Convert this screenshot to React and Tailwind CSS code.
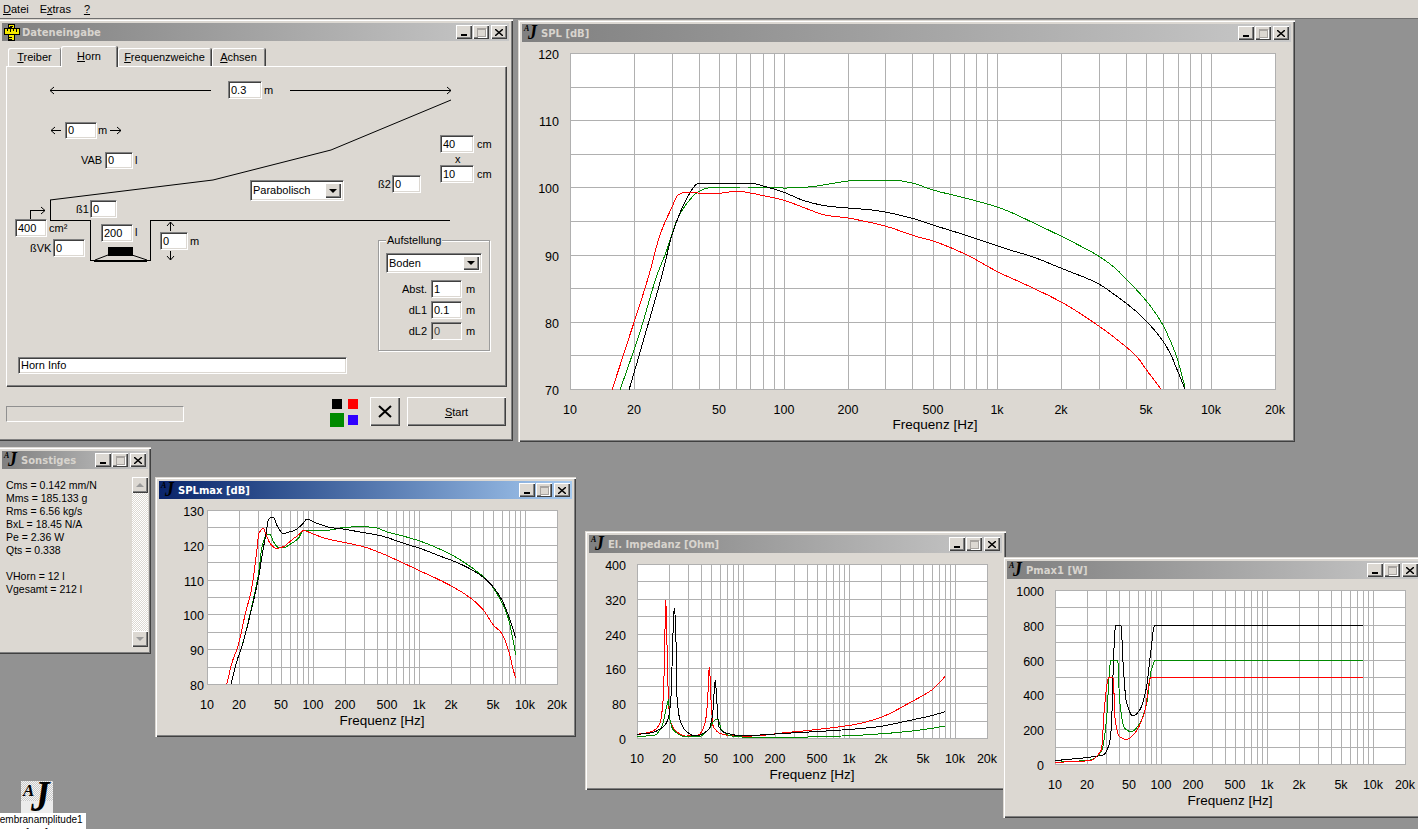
const sunken =
  "border border-t-[#808080] border-l-[#808080] border-r-white border-b-white shadow-[inset_1px_1px_0_#404040,inset_-1px_-1px_0_#dcd8d2]";
const raised =
  "bg-[#dcd8d2] shadow-[inset_1px_1px_0_#fff,inset_-1px_-1px_0_#404040,inset_-2px_-2px_0_#808080]";

// converts points read off a 3x crop back to page coordinates
const z = (ox, oy, pts) => pts.map(([x, y]) => `${ox + x / 3},${oy + y / 3}`).join(" ");

// hermite spline over x through the traced points; slope 0 at peaks so nothing overshoots
const smooth = (str) => {
  const p = str.split(" ").map((s) => s.split(",").map(Number));
  const seg = (i) => (p[i + 1][1] - p[i][1]) / (p[i + 1][0] - p[i][0]);
  const slope = (i) => {
    if (i === 0) return seg(0);
    if (i === p.length - 1) return seg(i - 1);
    const l = seg(i - 1);
    const r = seg(i);
    if (l * r <= 0) return 0;
    return (2 * l * r) / (l + r);
  };
  const out = [];
  for (let i = 0; i < p.length - 1; i++) {
    const [x0, y0] = p[i];
    const [x1, y1] = p[i + 1];
    const d = x1 - x0;
    const m0 = slope(i) * d;
    const m1 = slope(i + 1) * d;
    for (let s = 0; s < 6; s++) {
      const t = s / 6;
      const t2 = t * t;
      const t3 = t2 * t;
      const y =
        (2 * t3 - 3 * t2 + 1) * y0 + (t3 - 2 * t2 + t) * m0 + (-2 * t3 + 3 * t2) * y1 + (t3 - t2) * m1;
      out.push(`${(x0 + d * t).toFixed(1)},${y.toFixed(1)}`);
    }
  }
  const last = p[p.length - 1];
  out.push(`${last[0]},${last[1]}`);
  return out.join(" ");
};

const FREQS = [];
[10, 100, 1000].forEach((d) => {
  for (let i = 1; i < 10; i++) FREQS.push(d * i);
});
FREQS.push(10000, 20000);

const XLABELS = [
  [10, "10"],
  [20, "20"],
  [50, "50"],
  [100, "100"],
  [200, "200"],
  [500, "500"],
  [1000, "1k"],
  [2000, "2k"],
  [5000, "5k"],
  [10000, "10k"],
  [20000, "20k"],
];

const AjLogo = ({ big }) => (
  <span
    className={`flex shrink-0 items-start font-['Liberation_Serif',serif] font-bold italic text-black ${
      big ? "h-[32px] w-[32px] pl-[2px]" : "h-[16px] w-[15px]"
    }`}
  >
    <span className={big ? "text-[17px] leading-[20px]" : "text-[8px] leading-[8px]"}>A</span>
    <span
      className={`origin-left scale-x-[0.85] ${
        big ? "-ml-[3px] text-[44px] leading-[32px]" : "-ml-[1px] text-[21px] leading-[15px]"
      }`}
    >
      J
    </span>
  </span>
);

const RulerIcon = () => (
  <svg width="16" height="17" viewBox="0 0 16 17" className="shrink-0" shapeRendering="crispEdges">
    <rect x="4.5" y="0.5" width="6" height="16" fill="#f5e800" stroke="#000" />
    <rect x="0.5" y="4.5" width="15" height="6" fill="#f5e800" stroke="#000" />
    <path d="M3 5v2M6 5v3M9 5v2M12 5v3M5 3h3M5 13h3M5 15h3M6 2h3" stroke="#000" fill="none" />
  </svg>
);

const TitleBar = ({ title, active, icon }) => (
  <div
    className={`flex h-[18px] shrink-0 items-center pl-[2px] pr-[2px] ${
      active
        ? "bg-linear-to-r from-[#0a246a] to-[#a6caf0]"
        : "bg-linear-to-r from-[#808080] to-[#c8c8c8]"
    }`}
  >
    {icon || <AjLogo />}
    <span
      className={`ml-[2px] flex-1 truncate font-['DejaVu_Sans',sans-serif] text-[10px] font-bold ${
        active ? "text-white" : "text-[#d8d4ce]"
      }`}
    >
      {title}
    </span>
    <div className="flex gap-[1px]">
      <div className={`${raised} flex h-[14px] w-[16px] items-end justify-center pb-[3px]`}>
        <div className="h-[2px] w-[6px] bg-black" />
      </div>
      <div className={`${raised} mr-[1px] flex h-[14px] w-[16px] items-center justify-center`}>
        <div className="h-[9px] w-[9px] border border-t-2 border-[#a8a4a0] shadow-[1px_1px_0_#fff]" />
      </div>
      <div className={`${raised} flex h-[14px] w-[16px] items-center justify-center`}>
        <svg width="8" height="7" viewBox="0 0 8 7">
          <path d="M0 0L8 7M8 0L0 7" stroke="#000" strokeWidth="1.4" />
        </svg>
      </div>
    </div>
  </div>
);

const Win = ({ className, title, active, icon, children }) => (
  <div
    className={`absolute flex flex-col bg-[#dcd8d2] p-[4px] shadow-[inset_1px_1px_0_#dcd8d2,inset_2px_2px_0_#fff,inset_-1px_-1px_0_#404040,inset_-2px_-2px_0_#808080] ${className}`}
  >
    <TitleBar title={title} active={active} icon={icon} />
    {children}
  </div>
);

const Chart = ({ box, plot, labels, gap, curves, labelX, labelY = 41 }) => {
  const [left, top, right, bottom] = plot;
  const px = (f) => Math.round(left + ((right - left) * Math.log10(f / 10)) / Math.log10(2000));
  const py = (i) => Math.round(top + ((bottom - top) * i) / 10);
  return (
    <svg viewBox={box.join(" ")} width={box[2]} height={box[3]} className="block">
      <rect x={left} y={top} width={right - left} height={bottom - top} fill="#fff" />
      <g stroke="#b0b0b0" shapeRendering="crispEdges">
        {FREQS.map((f) => (
          <line key={f} x1={px(f) + 0.5} x2={px(f) + 0.5} y1={top} y2={bottom} />
        ))}
        {[0, 1, 2, 3, 4, 5, 6, 7, 8, 9, 10].map((i) => (
          <line key={i} x1={left} x2={right} y1={py(i) + 0.5} y2={py(i) + 0.5} />
        ))}
        <line x1={right + 0.5} x2={right + 0.5} y1={top} y2={bottom + 1} />
      </g>
      <g fill="none" shapeRendering="crispEdges">
        {curves.map(([color, points]) => (
          <polyline key={color} points={smooth(points)} stroke={color} />
        ))}
      </g>
      <g fontSize="12.5" fill="#000">
        {labels.map((l, i) => (
          <text key={l} x={left - gap} y={py(i * 2) + 6} textAnchor="end">
            {l}
          </text>
        ))}
        {XLABELS.map(([f, l]) => (
          <text key={l} x={px(f)} y={bottom + 25} textAnchor="middle">
            {l}
          </text>
        ))}
        <text x={labelX || (left + right) / 2} y={bottom + labelY} textAnchor="middle" fontSize="13.5">
          Frequenz [Hz]
        </text>
      </g>
    </svg>
  );
};

const splCurves = [
  [
    "#008a00",
    "620,390 640,332 657,275 665,255 678,218 688,202 698,192 708,188 748,187 765,187 783,188 808,187 835,183 848,181 865,180 892,180 912,183 933,190 965,198 1000,208 1040,226 1088,250 1100,257 1115,268 1127,280 1143,297 1160,320 1170,340 1177,358 1185,387",
  ],
  [
    "#000000",
    "629,390 645,335 662,275 672,235 678,218 687,198 697,184 700,183 750,183 763,186 783,192 805,201 827,206 848,208 872,210 885,212 915,219 933,225 965,235 1010,250 1033,257 1063,269 1097,283 1115,295 1138,313 1148,323 1160,337 1170,353 1178,372 1185,389",
  ],
  [
    "#ff0000",
    "612,390 625,350 649,275 660,235 672,207 678,195 687,192 698,193 722,193 736,191 750,193 765,196 783,200 805,208 825,215 848,218 868,222 885,226 915,236 933,241 965,254 1000,273 1020,282 1063,303 1090,320 1115,338 1137,357 1148,372 1161,389",
  ],
];

const splMaxCurves = [
  [
    "#008a00",
    z(155, 475, [
      [228, 628], [245, 560], [262, 510], [290, 395], [310, 300], [322, 210], [335, 180], [345, 178], [355, 200], [370, 217], [385, 218], [410, 205], [430, 190], [445, 167], [470, 167], [525, 165], [570, 157], [625, 155], [660, 158], [700, 172], [740, 182], [800, 200], [860, 225], [900, 245], [960, 285], [1000, 320], [1035, 372], [1060, 430], [1075, 500], [1082, 540],
    ]),
  ],
  [
    "#000000",
    z(155, 475, [
      [228, 628], [245, 560], [262, 510], [290, 400], [310, 310], [325, 220], [335, 165], [340, 135], [350, 127], [356, 128], [365, 150], [385, 175], [400, 172], [420, 165], [440, 150], [457, 132], [475, 140], [500, 150], [530, 158], [570, 163], [620, 172], [680, 183], [740, 203], [800, 222], [860, 245], [900, 260], [960, 290], [1000, 320], [1035, 365], [1060, 420], [1075, 465], [1082, 490],
    ]),
  ],
  [
    "#ff0000",
    z(155, 475, [
      [215, 628], [232, 560], [250, 510], [270, 420], [290, 340], [305, 230], [312, 175], [325, 160], [332, 175], [345, 205], [365, 220], [385, 215], [410, 195], [430, 180], [445, 167], [475, 177], [510, 190], [570, 203], [625, 215], [680, 235], [740, 262], [800, 290], [860, 318], [910, 345], [950, 372], [985, 405], [1015, 450], [1040, 475], [1060, 525], [1075, 585], [1082, 610],
    ]),
  ],
];

const impCurves = [
  [
    "#ff0000",
    z(585, 530, [
      [157, 613], [200, 605], [225, 580], [235, 500], [240, 300], [242, 210], [245, 300], [250, 500], [255, 570], [270, 600], [300, 618], [340, 615], [360, 580], [368, 510], [373, 410], [378, 510], [385, 590], [410, 612], [450, 618], [500, 618], [600, 608], [700, 598], [800, 585], [880, 565], [980, 515], [1040, 480], [1080, 440],
    ]),
  ],
  [
    "#008a00",
    z(585, 530, [
      [157, 620], [210, 615], [230, 590], [245, 530], [250, 510], [255, 570], [265, 600], [300, 620], [340, 620], [370, 600], [385, 575], [398, 567], [410, 600], [440, 618], [500, 622], [600, 622], [770, 618], [880, 612], [980, 603], [1040, 595], [1080, 588],
    ]),
  ],
  [
    "#000000",
    z(585, 530, [
      [157, 613], [200, 608], [235, 590], [250, 565], [258, 500], [264, 310], [268, 237], [272, 290], [276, 500], [285, 570], [300, 600], [330, 618], [370, 600], [382, 560], [388, 480], [391, 450], [395, 510], [402, 590], [420, 608], [470, 617], [600, 610], [770, 600], [880, 590], [980, 570], [1040, 557], [1080, 545],
    ]),
  ],
];

const pmaxCurves = [
  [
    "#000000",
    z(1003, 555, [
      [157, 617], [300, 600], [318, 570], [325, 520], [332, 300], [338, 212], [354, 212], [360, 320], [370, 440], [390, 483], [410, 465], [430, 400], [442, 300], [455, 212], [1080, 212],
    ]),
  ],
  [
    "#008a00",
    z(1003, 555, [
      [157, 622], [260, 615], [295, 590], [310, 500], [320, 340], [324, 316], [344, 316], [350, 440], [365, 520], [385, 530], [410, 505], [430, 450], [445, 345], [458, 316], [1080, 316],
    ]),
  ],
  [
    "#ff0000",
    z(1003, 555, [
      [157, 622], [260, 617], [295, 585], [305, 450], [317, 368], [330, 368], [337, 500], [350, 545], [370, 553], [395, 535], [425, 470], [443, 368], [1080, 368],
    ]),
  ],
];

const Field = ({ className, children, disabled }) => (
  <div
    className={`flex items-center pl-[2px] ${sunken} ${disabled ? "bg-[#dcd8d2]" : "bg-white"} ${className}`}
  >
    {children}
  </div>
);

const Combo = ({ className, children }) => (
  <div className={`flex items-center justify-between bg-white p-[2px] ${sunken} ${className}`}>
    {children}
    <div className={`${raised} flex h-full w-[16px] items-center justify-center`}>
      <svg width="8" height="4" viewBox="0 0 8 4">
        <polygon points="0,0 8,0 4,4" fill="#000" />
      </svg>
    </div>
  </div>
);

const Label = ({ className, children }) => (
  <span className={`absolute leading-[14px] ${className}`}>{children}</span>
);

const Tab = ({ active, className, children }) => (
  <div
    className={`flex items-center justify-center rounded-t-[2px] bg-[#dcd8d2] shadow-[inset_1px_1px_0_#fff,inset_-1px_0_0_#808080,1px_0_0_#404040] ${
      active ? "relative z-10 h-[21px] pb-[1px]" : "h-[19px]"
    } ${className}`}
  >
    {children}
  </div>
);

const HornDrawing = () => (
  <svg viewBox="6 66 500 320" width="500" height="320" className="absolute left-0 top-0" fill="none" stroke="#000">
    <g shapeRendering="crispEdges">
      <line x1="50" x2="211" y1="90.5" y2="90.5" />
      <line x1="290" x2="451" y1="90.5" y2="90.5" />
      <line x1="50.5" x2="50.5" y1="200" y2="220" />
      <line x1="50" x2="91" y1="220.5" y2="220.5" />
      <line x1="90.5" x2="90.5" y1="220" y2="261" />
      <line x1="150.5" x2="150.5" y1="220" y2="261" />
      <line x1="150" x2="450" y1="220.5" y2="220.5" />
      <line x1="90" x2="151" y1="260.5" y2="260.5" />
      <line x1="94" x2="147" y1="261.5" y2="261.5" />
      <rect x="108" y="247" width="24" height="8" fill="#000" />
      <line x1="61" x2="51" y1="130.5" y2="130.5" />
      <line x1="110" x2="121" y1="130.5" y2="130.5" />
      <path d="M30.5 220V210.5H45" />
      <line x1="170.5" x2="170.5" y1="222" y2="231" />
      <line x1="170.5" x2="170.5" y1="251" y2="260" />
    </g>
    <polyline points="50,200 213,180 331,150 451,100" />
    <path d="M95 260L108 255M132 255L147 260" />
    <path d="M54 87L50 90.5L54 94M447 87L451 90.5L447 94" />
    <path d="M55 127L51 130.5L55 134M117 127L121 130.5L117 134M41 207L45 210.5L41 214" />
    <path d="M167 226L170.5 222L174 226M167 256L170.5 260L174 256" />
  </svg>
);

const Dateneingabe = () => (
  <Win
    className="left-[-2px] top-[19px] h-[422px] w-[515px]"
    title="Dateneingabe"
    icon={<RulerIcon />}
  >
    <div className="mt-[5px] flex h-[21px] items-end pl-[6px]">
      <Tab className="w-[53px]"><span><u>T</u>reiber</span></Tab>
      <Tab active className="w-[56px]"><span><u>H</u>orn</span></Tab>
      <Tab className="ml-[1px] w-[93px]"><span><u>F</u>requenzweiche</span></Tab>
      <Tab className="ml-[1px] w-[53px]"><span><u>A</u>chsen</span></Tab>
    </div>
    <div className="relative -mt-[1px] ml-[4px] h-[320px] w-[500px] bg-[#dcd8d2] shadow-[inset_1px_1px_0_#fff,inset_-1px_-1px_0_#808080,1px_1px_0_#404040]">
      <HornDrawing />

      <Field className="absolute left-[222px] top-[15px] h-[18px] w-[34px]">0.3</Field>
      <Label className="left-[258px] top-[17px]">m</Label>

      <Field className="absolute left-[59px] top-[56px] h-[17px] w-[32px]">0</Field>
      <Label className="left-[92px] top-[57px]">m</Label>

      <Label className="left-[75px] top-[87px]">VAB</Label>
      <Field className="absolute left-[99px] top-[86px] h-[17px] w-[28px]">0</Field>
      <Label className="left-[129px] top-[87px]">l</Label>

      <Field className="absolute left-[434px] top-[69px] h-[18px] w-[34px]">40</Field>
      <Label className="left-[471px] top-[71px]">cm</Label>
      <Label className="left-[449px] top-[86px]">x</Label>
      <Field className="absolute left-[434px] top-[99px] h-[18px] w-[34px]">10</Field>
      <Label className="left-[471px] top-[101px]">cm</Label>

      <Label className="left-[372px] top-[111px]">ß2</Label>
      <Field className="absolute left-[386px] top-[109px] h-[18px] w-[29px]">0</Field>

      <Combo className="absolute left-[244px] top-[114px] h-[21px] w-[94px]">Parabolisch</Combo>

      <Label className="left-[70px] top-[136px]">ß1</Label>
      <Field className="absolute left-[84px] top-[134px] h-[18px] w-[27px]">0</Field>

      <Field className="absolute left-[9px] top-[153px] h-[18px] w-[32px]">400</Field>
      <Label className="left-[43px] top-[155px]">cm²</Label>

      <Label className="left-[24px] top-[175px]">ßVK</Label>
      <Field className="absolute left-[47px] top-[173px] h-[18px] w-[32px]">0</Field>

      <Field className="absolute left-[95px] top-[158px] h-[18px] w-[32px]">200</Field>
      <Label className="left-[129px] top-[159px]">l</Label>

      <Field className="absolute left-[154px] top-[166px] h-[18px] w-[28px]">0</Field>
      <Label className="left-[184px] top-[168px]">m</Label>

      <div className="absolute left-[372px] top-[174px] h-[111px] w-[112px] border border-[#9c9c9c] shadow-[1px_1px_0_#fff,inset_1px_1px_0_#fff]">
        <span className="absolute left-[7px] top-[-8px] bg-[#dcd8d2] px-px leading-[14px]">Aufstellung</span>
        <Combo className="ml-[7px] mt-[12px] h-[20px] w-[96px]">Boden</Combo>
        <div className="mt-[7px] grid grid-cols-[41px_31px_auto] items-center gap-x-[4px] gap-y-[3px] pl-[7px]">
          <span className="text-right">Abst.</span>
          <Field className="h-[18px]">1</Field>
          <span>m</span>
          <span className="text-right">dL1</span>
          <Field className="h-[18px]">0.1</Field>
          <span>m</span>
          <span className="text-right">dL2</span>
          <Field disabled className="h-[18px] text-[#404040]">0</Field>
          <span>m</span>
        </div>
      </div>

      <Field className="absolute left-[12px] top-[291px] h-[17px] w-[329px]">Horn Info</Field>
    </div>

    <div className="ml-[4px] mt-[11px] flex items-start">
      <div className="mt-[9px] h-[16px] w-[178px] border border-t-[#909090] border-l-[#909090] border-b-white border-r-white" />
      <div className="ml-[146px] mt-[2px] grid grid-cols-[14px_10px] grid-rows-[10px_14px] place-items-center gap-x-[4px] gap-y-[4px]">
        <div className="h-[10px] w-[10px] bg-black" />
        <div className="h-[10px] w-[10px] bg-[#ff0000]" />
        <div className="h-[14px] w-[14px] bg-[#008a00]" />
        <div className="h-[10px] w-[10px] bg-[#3000ff]" />
      </div>
      <div className={`${raised} ml-[12px] flex h-[29px] w-[30px] items-center justify-center`}>
        <svg width="14" height="13" viewBox="0 0 14 13">
          <path d="M1 1L13 12M13 1L1 12" stroke="#000" strokeWidth="2" />
        </svg>
      </div>
      <div className={`${raised} ml-[7px] flex h-[29px] w-[99px] items-center justify-center pt-[2px]`}>
        <span><u>S</u>tart</span>
      </div>
    </div>
  </Win>
);

const SONSTIGES = [
  "Cms = 0.142 mm/N",
  "Mms = 185.133 g",
  "Rms = 6.56 kg/s",
  "BxL = 18.45 N/A",
  "Pe = 2.36 W",
  "Qts = 0.338",
  "\u00a0",
  "VHorn = 12 l",
  "Vgesamt = 212 l",
];

const Sonstiges = () => (
  <Win className="left-[-2px] top-[447px] h-[207px] w-[153px] pr-[3px]" title="Sonstiges">
    <div className="flex flex-1 pt-[8px]">
      <div className="flex-1 pl-[4px] pt-[2px] text-[10.5px] leading-[13px]">
        {SONSTIGES.map((line, i) => (
          <div key={i}>{line}</div>
        ))}
      </div>
      <div className="flex h-[170px] w-[16px] flex-col bg-[image:repeating-conic-gradient(#fff_0_25%,#dcd8d2_0_50%)] bg-[length:2px_2px]">
        <div className={`${raised} flex h-[16px] items-center justify-center`}>
          <svg width="8" height="4" viewBox="0 0 8 4">
            <polygon points="4,0 8,4 0,4" fill="#9a9a9a" />
          </svg>
        </div>
        <div className="flex-1" />
        <div className={`${raised} flex h-[16px] items-center justify-center`}>
          <svg width="8" height="4" viewBox="0 0 8 4">
            <polygon points="0,0 8,0 4,4" fill="#9a9a9a" />
          </svg>
        </div>
      </div>
    </div>
  </Win>
);

export default function App() {
  return (
    <div className="relative h-[829px] w-[1418px] overflow-hidden bg-[#929292] font-['Liberation_Sans',sans-serif] text-[11px] text-black">
      <div className="flex h-[19px] items-center gap-[11px] border-b border-[#707070] bg-[#dcd8d2] pl-[3px]">
        <span><u>D</u>atei</span>
        <span>E<u>x</u>tras</span>
        <span className="ml-[2px]"><u>?</u></span>
      </div>

      <Dateneingabe />

      <Win className="left-[518px] top-[20px] h-[422px] w-[777px]" title="SPL [dB]">
        <Chart
          box={[522, 42, 769, 396]}
          plot={[570, 53, 1275, 389]}
          labels={["120", "110", "100", "90", "80", "70"]}
          gap={11}
          curves={splCurves}
          labelX={935}
          labelY={40}
        />
      </Win>

      <Sonstiges />

      <Win className="left-[155px] top-[477px] h-[260px] w-[421px]" title="SPLmax [dB]" active>
        <Chart
          box={[159, 499, 413, 234]}
          plot={[207, 510, 557, 684]}
          labels={["130", "120", "110", "100", "90", "80"]}
          gap={3}
          curves={splMaxCurves}
        />
      </Win>

      <Win className="left-[585px] top-[531px] h-[259px] w-[421px]" title="El. Impedanz [Ohm]">
        <Chart
          box={[589, 553, 413, 233]}
          plot={[637, 564, 987, 738]}
          labels={["400", "320", "240", "160", "80", "0"]}
          gap={11}
          curves={impCurves}
        />
      </Win>

      <Win className="left-[1003px] top-[557px] h-[261px] w-[421px]" title="Pmax1 [W]">
        <Chart
          box={[1007, 579, 413, 234]}
          plot={[1055, 590, 1405, 764]}
          labels={["1000", "800", "600", "400", "200", "0"]}
          gap={11}
          curves={pmaxCurves}
        />
      </Win>

      <div className="absolute left-[-12px] top-[781px] flex w-[98px] flex-col items-center">
        <div className="relative h-[32px] w-[32px] bg-[#ececec]">
          <div className="absolute inset-x-0 top-0 h-[20px] bg-[image:repeating-conic-gradient(#c8c8c8_0_25%,#f4f4f4_0_50%)] bg-[length:2px_2px]" />
          <div className="absolute inset-0">
            <AjLogo big />
          </div>
        </div>
        <div className="w-full bg-white text-center text-[10px] leading-[13px]">
          Membranamplitude1
          <br />
          [mm]
        </div>
      </div>
    </div>
  );
}
